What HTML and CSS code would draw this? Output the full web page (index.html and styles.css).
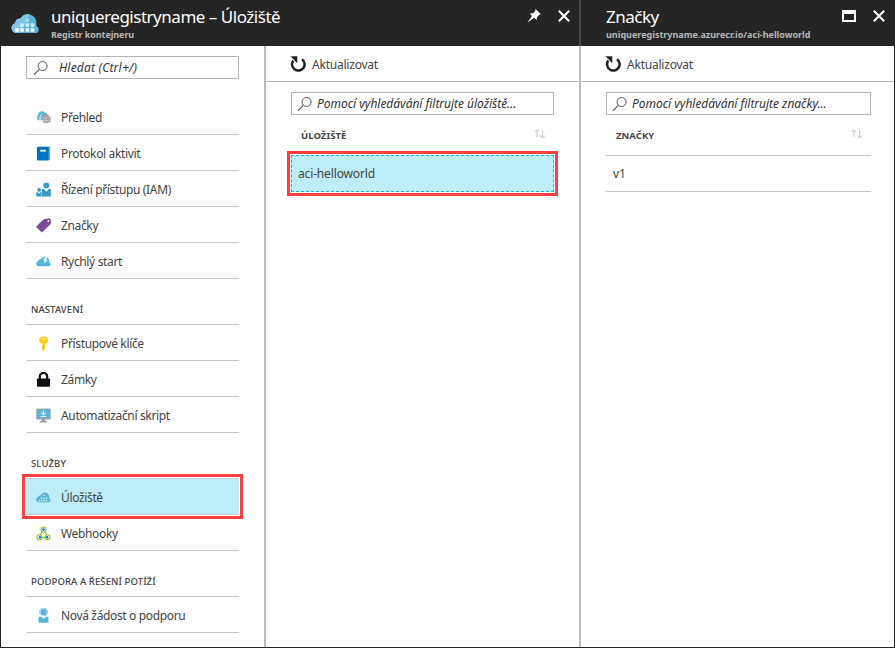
FILE: index.html
```html
<!DOCTYPE html>
<html lang="cs">
<head>
<meta charset="utf-8">
<title>uniqueregistryname – Úložiště</title>
<link rel="stylesheet" href="styles.css">
</head>
<body>
<svg class="defs" width="0" height="0" aria-hidden="true">
  <symbol id="search" viewBox="0 0 16 16"><circle cx="9.600" cy="6" r="4.500" fill="none" stroke="#555" stroke-width="1"/><path d="M6.300 9.300L1 14.600" stroke="#555" stroke-width="1.200"/></symbol>
  <symbol id="refresh" viewBox="0 0 16 16"><path d="M12 3.200A6.300 6.300 0 1 1 3.300 4.500" fill="none" stroke="#222" stroke-width="2.500"/><path d="M.5.300H7.300V7.200z" fill="#222"/></symbol>
  <symbol id="close" viewBox="0 0 12 12"><path d="M.8.8L11.200 11.200M11.200.8L.8 11.200" stroke="#fff" stroke-width="2.100"/></symbol>
  <symbol id="sort" viewBox="0 0 12 10"><path d="M3 8V1M.5 3.300L3 .8l2.500 2.500M8.700 1.500V9M6.200 6.500L8.700 9l2.500-2.500" fill="none" stroke="#c4c4c4"/></symbol>
</svg>
<div class="portal">
  <section class="blade blade-main">
    <header class="blade-header">
      <svg class="logo" viewBox="0 0 30 20"><path d="M5 19A5 5 0 0 1 4 9.300A5.500 5.500 0 0 1 9.500 4.500A8.500 8.500 0 0 1 25.300 7.800V12A4 4 0 0 1 26 19z" fill="#59b4d9"/><path d="M5 19A5 5 0 0 1 4 9.300A5.500 5.500 0 0 1 9.500 4.500A8.500 8.500 0 0 1 19 .5L9 19z" fill="#81c7e4"/><path d="M14.500 4.500h3.500v3.500h-3.500z" fill="#a9d9ec"/><path d="M9.300 9.300h3.600v3.600h-3.600zm5.200 0h3.600v3.600h-3.600zm5.200 0h3.600v3.600h-3.600z" fill="#c9e7f3"/><path d="M4.200 14.200h3.600v3.600h-3.600zm5.100 0h3.600v3.600h-3.600zm5.200 0h3.600v3.600h-3.600zm5.200 0h3.600v3.600h-3.600z" fill="#f2fafd"/></svg>
      <div class="heading"><h1>uniqueregistryname – Úložiště</h1><p class="sub-main">Registr kontejneru</p></div>
      <div class="actions">
        <svg class="pin" viewBox="0 0 14 14"><path d="M8.500 0L14 5.200L12.500 5.500L10 8.200L9.800 11L7 8.700L.4 13.700L5 7L2.800 4.500L6 4.200L8.300 1.700z" fill="#fff"/></svg>
        <svg class="close"><use href="#close"/></svg>
      </div>
    </header>
    <div class="columns">
      <nav class="sidebar">
        <div class="search side-search"><svg><use href="#search"/></svg><span>Hledat (Ctrl+/)</span></div>
        <ul class="menu first">
          <li><svg viewBox="0 0 16 16"><path d="M2.500 11A3 3 0 0 1 2 6A4.500 4.500 0 0 1 10 3Q12 3.500 12 5L7 6L6 11z" fill="#59b4d9"/><path d="M3 9.500A2 2 0 0 1 4 7A3 3 0 0 1 7 4.500L5 11z" fill="#b8dff0"/><path d="M5.500 6L10 3.800L14 5.500V7L15.500 7.500V12.500L11.500 14L7.500 13V11.500L5.500 10.500z" fill="#a0a0a0"/><path d="M6 7.500l3 1.300 5-1.600M7.500 10.800l3.500 1 4.500-1.500M10.500 8.500v3" fill="none" stroke="#d8d8d8" stroke-width=".7"/></svg><span>Přehled</span></li>
          <li><svg viewBox="0 0 16 16"><path d="M3 .5H15V15H3z" fill="#68a9dc"/><path d="M1 1H13.500V15.500H2Q1 15.500 1 14z" fill="#0072c6"/><path d="M4.500 4h6v2h-6z" fill="#fff"/></svg><span>Protokol aktivit</span></li>
          <li><svg viewBox="0 0 16 16"><circle cx="11" cy="3.700" r="3.200" fill="#3999c6"/><circle cx="3.300" cy="8.500" r="2" fill="#3999c6"/><path d="M6.300 7.500H8.500L11 10.500L13.500 7.500h2.300V15.500H6.300zM.3 11H2L3.300 12.500L4.500 11H5.900V15.500H.3z" fill="#3999c6"/></svg><span>Řízení přístupu (IAM)</span></li>
          <li><svg viewBox="0 0 16 16"><path d="M8.500 1L14.500.5Q15.700.5 15.700 2V6.500L6.200 15.500L0 9.300z" fill="#804998"/><circle cx="13.200" cy="3.200" r="1" fill="#fff"/></svg><span>Značky</span></li>
          <li><svg viewBox="0 0 16 16"><path d="M3 13A2.800 2.800 0 0 1 2.300 7.500Q3 5.500 5 5.700A4.900 4.900 0 0 1 14 6V8.800A2.200 2.200 0 0 1 14 13z" fill="#59b4d9"/><path d="M11 2.500L7.500 7H9.500L8.500 11L12.300 6.300H10.500L12.500 3z" fill="#fff"/></svg><span>Rychlý start</span></li>
        </ul>
        <h2>NASTAVENÍ</h2>
        <ul class="menu">
          <li><svg viewBox="0 0 16 16"><path d="M5.500 .5H10.500L13 3.500V6L10 8.500V10L9 11L10 12L9 13V14.500L8 15.700L6.500 14.300V8.500L3.300 6V3.500z" fill="#fcd116"/><path d="M6.300 3h3.400" stroke="#fff"/><path d="M8.500 9v5" stroke="#dfa800" stroke-width=".7"/></svg><span>Přístupové klíče</span></li>
          <li><svg viewBox="0 0 16 16"><path d="M4 8V5a4 4 0 0 1 8 0V8" fill="none" stroke="#111" stroke-width="2.400"/><rect x="1" y="6.800" width="14" height="8.800" rx="1" fill="#111"/></svg><span>Zámky</span></li>
          <li><svg viewBox="0 0 16 16"><path d="M.3.600h15.400v11.600H.3z" fill="#a0a1a2"/><path d="M1.500 1.800h13v9.200h-13z" fill="#59b4d9"/><path d="M6 12h4v2h2v1.500H4V14h2z" fill="#929497"/><path d="M8 2.500V7M5.800 5L8 7.200L10.200 5M5 9h6" fill="none" stroke="#fff" stroke-width="1.200"/></svg><span>Automatizační skript</span></li>
        </ul>
        <h2 class="above-selected">SLUŽBY</h2>
        <ul class="menu">
          <li class="selected"><svg viewBox="0 0 16 16"><path d="M3 13A2.800 2.800 0 0 1 2.300 7.500Q3 5.500 5 5.500A4.900 4.900 0 0 1 14 6V8.800A2.200 2.200 0 0 1 14 13z" fill="#59b4d9"/><path d="M5 8h1.500v1.500H5zm2.700-3h1.600v1.500H7.700zm0 3h1.600v1.500H7.700zm2.800 0H12v1.500h-1.500zM3 10.500h1.500V12H3zm2.400 0H7V12H5.400zm2.400 0h1.500V12H7.800zm2.700 0H12V12h-1.500z" fill="#d6f0f9"/></svg><span>Úložiště</span></li>
          <li><svg viewBox="0 0 16 16"><path d="M6.700 5.500L4.300 10M9.300 5.500L11.700 10M5 12.500h6" stroke="#7fba00" stroke-width="1.100"/><g fill="#fff" stroke="#84bf16" stroke-width="1.100"><circle cx="8" cy="3.800" r="2.700"/><circle cx="3.700" cy="12" r="2.700"/><circle cx="12.300" cy="12" r="2.700"/></g><g fill="#0072c6"><circle cx="8" cy="3.800" r="1.300"/><circle cx="4.200" cy="11.900" r="1.300"/><circle cx="11.800" cy="11.900" r="1.300"/></g></svg><span>Webhooky</span></li>
        </ul>
        <h2>PODPORA A ŘEŠENÍ POTÍŽÍ</h2>
        <ul class="menu">
          <li><svg viewBox="0 0 16 16"><circle cx="8" cy="4.500" r="3.400" fill="#59b4d9"/><path d="M3.700 6V4.500a4.300 4.300 0 0 1 8.600 0V6Q11.500 8 9 8" fill="none" stroke="#59b4d9" stroke-width=".8"/><path d="M2.700 9.300H5.500L8 11.500L10.500 9.300H13.300V15.700H2.700z" fill="#59b4d9"/></svg><span>Nová žádost o podporu</span></li>
        </ul>
      </nav>
      <div class="content">
        <div class="toolbar"><svg><use href="#refresh"/></svg><span>Aktualizovat</span></div>
        <div class="list">
          <div class="search"><svg><use href="#search"/></svg><span>Pomocí vyhledávání filtrujte úložiště...</span></div>
          <div class="list-head"><span>ÚLOŽIŠTĚ</span><svg><use href="#sort"/></svg></div>
          <div class="row row-selected"><span>aci-helloworld</span></div>
        </div>
      </div>
    </div>
  </section>
  <section class="blade blade-tags">
    <header class="blade-header">
      <div class="heading"><h1>Značky</h1><p class="sub-tags">uniqueregistryname.azurecr.io/aci-helloworld</p></div>
      <div class="actions"><i class="maximize"></i><svg class="close"><use href="#close"/></svg></div>
    </header>
    <div class="toolbar"><svg><use href="#refresh"/></svg><span>Aktualizovat</span></div>
    <div class="list list-tags">
      <div class="search"><svg><use href="#search"/></svg><span>Pomocí vyhledávání filtrujte značky...</span></div>
      <div class="list-head"><span>ZNAČKY</span><svg><use href="#sort"/></svg></div>
      <div class="row"><span>v1</span></div>
    </div>
  </section>
</div>
</body>
</html>
```
FILE: styles.css
```css
* { box-sizing: border-box; }
body {
  margin: 0;
  background: #fff;
  color: #444;
  font: 12px/18px "Noto Sans", "Open Sans", sans-serif;
  white-space: nowrap;
}
h1, h2, p, ul { margin: 0; padding: 0; font-weight: 400; list-style: none; }
svg { display: block; flex: none; }
.defs { position: absolute; }
.portal {
  display: grid;
  grid-template-columns: 578px 1fr;
  height: 648px;
  border: 1px solid #252525;
  border-top: 0;
}
.blade { display: flex; flex-direction: column; }
.blade-tags { border-left: 2px solid #bbb; }
.blade-header {
  display: flex;
  height: 46px;
  padding: 6px 10px 0;
  background: #252525;
  color: #fff;
}
.blade-tags .blade-header { margin-left: -2px; padding: 6px 9px 0 25px; border-left: 2px solid #4a4a4a; }
.logo { width: 30px; height: 20px; margin-top: 8px; }
.heading { flex: 1; }
.blade-main .heading { margin-left: 10px; }
h1 { font-size: 17px; line-height: 22px; letter-spacing: -.48px; }
.sub-main, .sub-tags { padding-top: 1px; color: #b8b8b8; font-size: 9px; line-height: 12px; font-weight: 700; }
.sub-main { letter-spacing: -.08px; }
.actions { display: flex; align-items: flex-start; }
.pin { width: 14px; height: 14px; margin: 3px 17px 0 0; }
.close { width: 12px; height: 12px; margin-top: 4px; }
.blade-main .actions { margin-right: -1px; }
.maximize { width: 14px; height: 12px; margin: 4px 17px 0 0; border: 2px solid #fff; border-top-width: 4px; }
.columns { display: flex; flex: 1; }
.sidebar { width: 265px; padding: 10px 26px 0 25px; border-right: 2px solid #bbb; }
.content { flex: 1; }
.search {
  display: flex;
  align-items: center;
  height: 23px;
  padding-left: 5px;
  border: 1px solid #b4b4b4;
  color: #333;
  font-style: italic;
  letter-spacing: -.03px;
}
.search svg { width: 16px; height: 16px; }
.search span { margin-left: 4px; }
.side-search { margin-right: -1px; padding-left: 6px; letter-spacing: .2px; }
.side-search span { margin-left: 10px; }
.menu.first { margin-top: 20px; }
.menu li {
  display: flex;
  align-items: center;
  height: 36px;
  padding: 1px 0 0 10px;
  margin-right: -1px;
  border-bottom: 1px solid #c8c8c8;
  letter-spacing: -.35px;
}
.menu span { padding-top: 2px; }
.menu svg { width: 15px; height: 15px; margin-right: 10px; }
/* The highlighted row takes over the heading's rule as its own top border. */
.menu .selected {
  height: 37px;
  border-top: 1px solid #c8c8c8;
  background: #bdedf9;
  box-shadow: 0 0 0 1px #fff;
  outline: 3px solid #f94141;
  outline-offset: 1px;
}
.sidebar h2 {
  height: 46px;
  margin-right: -1px;
  padding: 22px 0 0 5px;
  border-bottom: 1px solid #c8c8c8;
  font-size: 9.5px;
  font-weight: 500;
  letter-spacing: .1px;
}
.sidebar .above-selected { height: 45px; border-bottom: 0; }
.toolbar {
  display: flex;
  align-items: center;
  height: 36px;
  padding: 1px 0 0 24px;
  border-bottom: 1px solid #bbb;
  letter-spacing: -.22px;
}
.toolbar svg { width: 16px; height: 16px; margin-right: 6px; }
.toolbar span { padding-top: 2px; }
.list { padding: 10px 25px 0; }
.list-tags { padding-right: 23px; }
.list-head {
  display: flex;
  justify-content: space-between;
  height: 40px;
  padding: 11px 8px 0 10px;
  font-size: 9.5px;
  font-weight: 700;
  letter-spacing: .05px;
}
.list-head span { padding-top: 1px; }
.list-head svg { width: 12px; height: 10px; margin-top: 3px; }
.row {
  display: flex;
  align-items: center;
  height: 37px;
  padding: 1px 0 0 7px;
  border: solid #c8c8c8;
  border-width: 1px 0;
  letter-spacing: -.15px;
}
.row-selected {
  padding-left: 6px;
  border: 1px dashed #1cb4e4;
  background: #bdedf9;
  outline: 3px solid #f94141;
  outline-offset: 1px;
}
```
